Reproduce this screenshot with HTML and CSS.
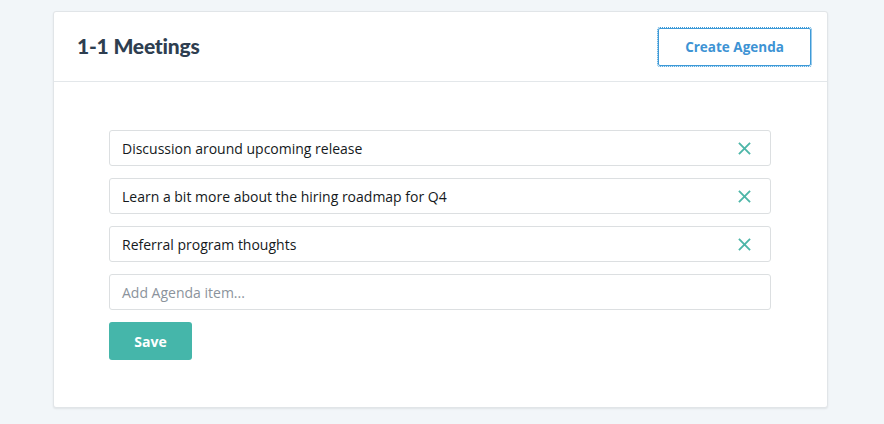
FILE: index.html
```html
<!DOCTYPE html>
<html>
<head>
<meta charset="utf-8">
<link rel="stylesheet" href="styles.css">
</head>
<body>
<div class="card">
  <div class="card-header">
    <h1 class="title">1-1 Meetings</h1>
    <button class="btn-outline">Create Agenda</button>
  </div>
  <div class="card-body">
    <div class="item"><span>Discussion around upcoming release</span>
      <svg class="x" viewBox="0 0 14 14"><path d="M1 1L13 13M13 1L1 13" /></svg></div>
    <div class="item"><span>Learn a bit more about the hiring roadmap for Q4</span>
      <svg class="x" viewBox="0 0 14 14"><path d="M1 1L13 13M13 1L1 13" /></svg></div>
    <div class="item"><span>Referral program thoughts</span>
      <svg class="x" viewBox="0 0 14 14"><path d="M1 1L13 13M13 1L1 13" /></svg></div>
    <div class="item input"><span>Add Agenda item...</span></div>
    <button class="btn-save">Save</button>
  </div>
</div>
</body>
</html>
```
FILE: styles.css
```css
html, body { margin: 0; padding: 0; }
body {
  background: #f2f6f9;
  font-family: "Open Sans", "Liberation Sans", sans-serif;
  width: 884px;
  height: 424px;
  overflow: hidden;
}
.card {
  margin: 11px 0 0 53px;
  width: 775px;
  height: 397px;
  background: #fff;
  border: 1px solid #e1e5e8;
  border-radius: 3px;
  box-shadow: 0 1px 2px rgba(0,0,0,0.08);
  box-sizing: border-box;
}
.card-header {
  height: 69px;
  border-bottom: 1px solid #e3e7ea;
  display: flex;
  align-items: center;
  justify-content: space-between;
  padding: 0 16px 0 23px;
}
.title {
  margin: 0;
  font-family: "Lato", "Open Sans", sans-serif;
  font-size: 21px;
  font-weight: 900;
  color: #2e3e50;
  letter-spacing: -0.2px;
  padding-bottom: 2px;
}
.btn-outline {
  width: 153px;
  height: 38px;
  background: #fff;
  border: 1px solid #3d9ad8;
  outline: 1px dotted #3d9ad8;
  border-radius: 2px;
  color: #3d93d4;
  font-family: inherit;
  font-size: 13.5px;
  font-weight: 700;
  padding: 0;
  margin-top: 1px;
}
.card-body {
  padding: 48px 56px 0 55px;
  display: flex;
  flex-direction: column;
  gap: 12px;
}
.item {
  height: 36px;
  box-sizing: border-box;
  border: 1px solid #dcdfe1;
  border-radius: 3px;
  display: flex;
  align-items: center;
  justify-content: space-between;
  padding: 0 19px 0 12px;
  font-size: 14px;
  color: #15191c;
}
.item.input { color: #8b939c; }
.x { width: 13px; height: 13px; }
.x path { stroke: #4db6a8; stroke-width: 2; fill: none; }
.btn-save {
  width: 83px;
  height: 38px;
  background: #45b6aa;
  border: none;
  border-radius: 3px;
  color: #fff;
  font-family: inherit;
  font-size: 14px;
  font-weight: 700;
  padding: 0;
}
```
